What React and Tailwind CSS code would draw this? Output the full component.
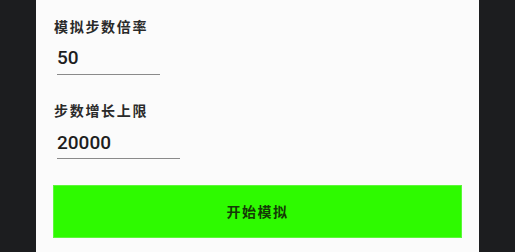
export default function App() {
  const cjk = { fontFamily: '"Noto Sans CJK SC", "Noto Sans", sans-serif' };
  const num = { fontFamily: 'Roboto, "Noto Sans", sans-serif' };
  return (
    <div className="w-[515px] h-[252px] bg-[#1c1d1f] flex justify-center overflow-hidden">
      <div className="w-[443px] h-full bg-[#fbfbfb] pl-[17px] pr-[17px] flex flex-col">
        <div style={cjk} className="ml-[1px] mt-[18px] text-[14px] leading-[17px] font-bold tracking-[1.7px] text-[#2a2a2a]">模拟步数倍率</div>
        <div className="ml-[4px] mt-[12px] w-[103px] border-b border-[#8a8a8a] pb-[5px]">
          <div style={num} className="text-[19px] leading-[22px] font-medium text-[#1e1e1e]">50</div>
        </div>
        <div style={cjk} className="ml-[1px] mt-[27px] text-[14px] leading-[17px] font-bold tracking-[1.7px] text-[#2a2a2a]">步数增长上限</div>
        <div className="ml-[4px] mt-[13px] w-[123px] border-b border-[#8a8a8a] pb-[4px]">
          <div style={num} className="text-[19px] leading-[22px] font-medium text-[#1e1e1e]">20000</div>
        </div>
        <div className="mt-[26px] w-[409px] h-[53px] bg-[#2efa00] border border-[#5cf83a] flex items-center justify-center">
          <span style={cjk} className="text-[14px] font-bold tracking-[1.5px] text-[#143a06]">开始模拟</span>
        </div>
      </div>
    </div>
  );
}
